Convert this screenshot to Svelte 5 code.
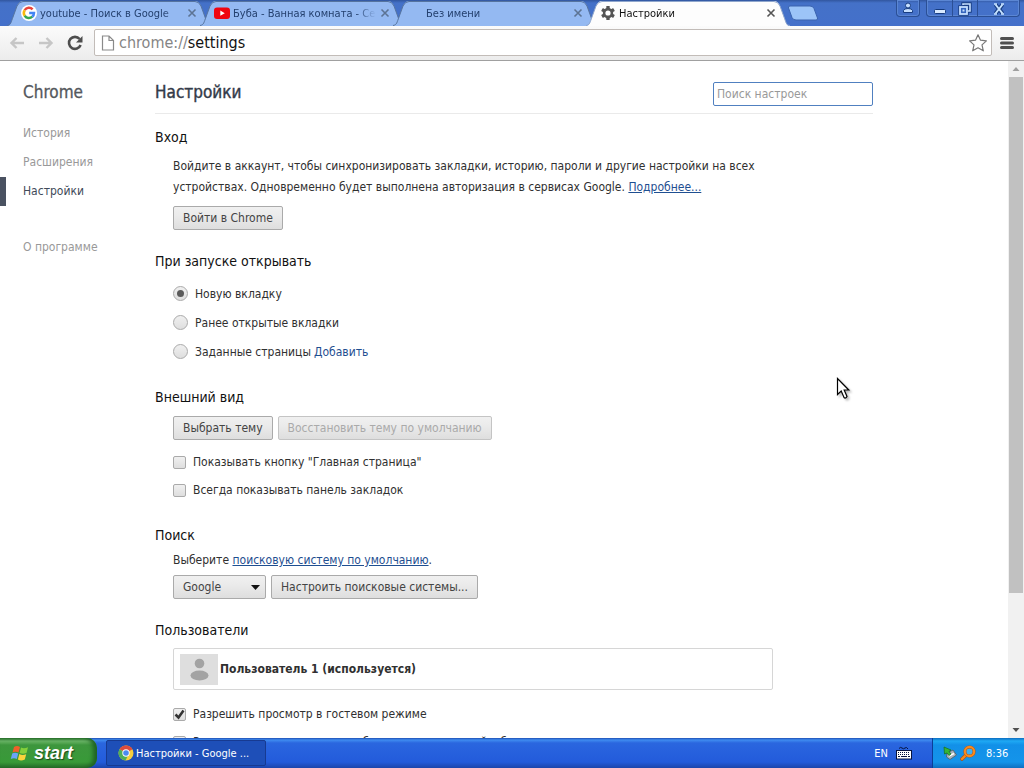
<script>
  let startup = $state('new');
  let home = $state(false);
  let bookmarks = $state(false);
  let guest = $state(true);
  let addPeople = $state(false);
  let query = $state('');
  let url = $state('chrome://settings');

  const tabs = [
    { title: 'youtube - Поиск в Google', icon: 'google' },
    { title: 'Буба - Ванная комната - Се', icon: 'youtube' },
    { title: 'Без имени', icon: '' },
    { title: 'Настройки', icon: 'gear', active: true }
  ];
  const startupOptions = [
    { value: 'new', label: 'Новую вкладку' },
    { value: 'last', label: 'Ранее открытые вкладки' },
    { value: 'pages', label: 'Заданные страницы' }
  ];
</script>

<div class="desktop">
  <header class="titlebar">
    <nav class="tabs">
      {#each tabs as tab}
        <div class="tab" class:active={tab.active}>
          <svg class="shape" viewBox="0 0 204 26" preserveAspectRatio="none" aria-hidden="true">
            <path class="fill" d="M0 26 C4 26 4 22 6 17 L10 6 Q12 1 16 1 H188 Q192 1 194 6 L198 17 C200 22 200 26 204 26 Z" />
            <path class="edge" d="M0 25.5 C4 25 4 22 6 17 L10 6 Q12 1.5 16 1.5 H188 Q192 1.5 194 6 L198 17 C200 22 200 25 204 25.5" />
          </svg>
          <span class="favicon">
            {#if tab.icon === 'google'}
              <svg viewBox="0 0 16 16" width="16" height="16">
                <circle cx="8" cy="8" r="8" fill="#fff" />
                <g fill="none" stroke-width="2.5">
                  <path d="M3.7 5.2 A5 5 0 0 1 11.6 4.4" stroke="#e8453c" />
                  <path d="M3.7 5.2 A5 5 0 0 0 3.7 10.8" stroke="#f7b90f" />
                  <path d="M3.7 10.8 A5 5 0 0 0 11.3 11.7" stroke="#34a753" />
                  <path d="M11.3 11.7 A5 5 0 0 0 13 8 H8.2" stroke="#4285f4" />
                </g>
              </svg>
            {:else if tab.icon === 'youtube'}
              <svg viewBox="0 0 16 16" width="16" height="16">
                <rect x="0" y="2.5" width="16" height="11.5" rx="3" fill="#f00510" />
                <path d="M6.3 5.6 L10.8 8.2 L6.3 10.8 Z" fill="#fff" />
              </svg>
            {:else if tab.icon === 'gear'}
              <svg viewBox="0 0 16 16" width="16" height="16">
                <g fill="#555">
                  <rect x="6.3" y="1" width="3.4" height="14" rx=".6" />
                  <rect x="6.3" y="1" width="3.4" height="14" rx=".6" transform="rotate(60 8 8)" />
                  <rect x="6.3" y="1" width="3.4" height="14" rx=".6" transform="rotate(120 8 8)" />
                  <circle cx="8" cy="8" r="5.2" />
                </g>
                <circle cx="8" cy="8" r="2.6" fill="#fff" />
              </svg>
            {/if}
          </span>
          <span class="title">{tab.title}</span>
          <button class="close" aria-label="Закрыть вкладку">
            <svg viewBox="0 0 10 10" width="10" height="10"><path d="M1.5 1.5 L8.5 8.5 M8.5 1.5 L1.5 8.5" stroke="currentColor" stroke-width="1.6" /></svg>
          </button>
        </div>
      {/each}
      <button class="newtab" aria-label="Новая вкладка">
        <svg viewBox="0 0 32 16" width="32" height="16">
          <path d="M3 1 H23 Q26 1 27 3.5 L30.5 13 Q31 15 29 15 H9 Q6 15 5 12.5 L1.5 3 Q1 1 3 1 Z" fill="#9cc4f8" stroke="#3a63ae" />
        </svg>
      </button>
    </nav>
    <div class="window-buttons">
      <button class="user" aria-label="Пользователь">
        <svg viewBox="0 0 14 14" width="14" height="14"><g fill="#c6dfff" stroke="#173c80"><circle cx="7" cy="4.5" r="2.5" /><path d="M2.5 11.5 V9.500 Q3 7.500 7 7.500 T11.500 9.500 V11.500 Z" /></g></svg>
      </button>
      <div class="group">
        <button aria-label="Свернуть"><svg viewBox="0 0 14 14" width="14" height="14"><rect x="1.5" y="7.5" width="11" height="4" rx="1" fill="#d9eaff" stroke="#173c80" /></svg></button>
        <button aria-label="Развернуть"><svg viewBox="0 0 14 14" width="14" height="14"><g fill="none"><path d="M5 3 V2 H12 V9 H10" stroke="#173c80" stroke-width="3.4" /><rect x="2" y="5" width="7" height="7" stroke="#173c80" stroke-width="3.4" /><path d="M5 3 V2 H12 V9 H10" stroke="#c6dfff" stroke-width="1.6" /><rect x="2" y="5" width="7" height="7" fill="#3565bd" stroke="#c6dfff" stroke-width="1.8" /><rect x="4.5" y="7.5" width="2" height="2" fill="#c6dfff" /></g></svg></button>
        <button class="wide" aria-label="Закрыть"><svg viewBox="0 0 14 14" width="14" height="14"><g fill="none"><path d="M3.5 2.5 L10.5 11.5 M10.5 2.5 L3.5 11.5" stroke="#173c80" stroke-width="4" /><path d="M3.5 2.5 L10.5 11.5 M10.5 2.5 L3.5 11.5" stroke="#c6e2ff" stroke-width="2" /></g><path d="M2 2 H5 M9 2 H12 M2 12 H5 M9 12 H12" stroke="#c6e2ff" stroke-width="1.4" /></svg></button>
      </div>
    </div>
  </header>

  <div class="toolbar">
    <button class="nav" aria-label="Назад"><svg viewBox="0 0 16 16" width="16" height="16"><path d="M15 8 H3 M7.5 3 L2.5 8 L7.5 13" fill="none" stroke="#c6c6c6" stroke-width="2.4" /></svg></button>
    <button class="nav" aria-label="Вперёд"><svg viewBox="0 0 16 16" width="16" height="16"><path d="M1 8 H13 M8.5 3 L13.5 8 L8.5 13" fill="none" stroke="#c6c6c6" stroke-width="2.4" /></svg></button>
    <button class="nav" aria-label="Обновить"><svg viewBox="0 0 16 16" width="16" height="16"><path d="M12.6 4 A6 6 0 1 0 13.6 10" fill="none" stroke="#4d4d4d" stroke-width="2.6" /><path d="M15.5 1 V7.5 H9 Z" fill="#4d4d4d" /></svg></button>
    <div class="omnibox">
      <svg viewBox="0 0 14 16" width="14" height="16" aria-hidden="true"><path d="M1.5 1 H8 L12.5 5.5 V15 H1.5 Z M8 1 V5.5 H12.5" fill="#fff" stroke="#8a8a8a" stroke-width="1.2" /></svg>
      <label class="address">
        <span class="shown" aria-hidden="true"><i>{url.slice(0, 9)}</i>{url.slice(9)}</span>
        <input type="text" aria-label="Адрес" bind:value={url} />
      </label>
      <button class="star" aria-label="Добавить в закладки"><svg viewBox="0 0 20 20" width="20" height="20"><path d="M10 1.8 L12.5 7.2 L18.4 7.9 L14 11.9 L15.3 17.8 L10 14.8 L4.7 17.8 L6 11.9 L1.6 7.9 L7.5 7.2 Z" fill="#fff" stroke="#777" stroke-width="1.2" stroke-linejoin="round" /></svg></button>
    </div>
    <button class="menu" aria-label="Меню"><svg viewBox="0 0 14 14" width="14" height="14"><path d="M1.5 2.5 H12.5 M1.5 7 H12.5 M1.5 11.5 H12.5" stroke="#505050" stroke-width="3" stroke-linecap="round" /></svg></button>
  </div>

  <div class="page">
    <aside>
      <h1>Chrome</h1>
      <a href="#history">История</a>
      <a href="#extensions">Расширения</a>
      <a href="#settings" class="current">Настройки</a>
      <a href="#about" class="about">О программе</a>
    </aside>

    <main>
      <div class="head">
        <h2>Настройки</h2>
        <input type="search" aria-label="Поиск настроек" placeholder="Поиск настроек" bind:value={query} />
      </div>

      <section>
        <h3>Вход</h3>
        <p>Войдите в аккаунт, чтобы синхронизировать закладки, историю, пароли и другие настройки на всех устройствах. Одновременно будет выполнена авторизация в сервисах Google. <a class="underlined" href="#more">Подробнее...</a></p>
        <div class="row first"><button class="btn">Войти в Chrome</button></div>
      </section>

      <section>
        <h3>При запуске открывать</h3>
        <div class="radios">
          {#each startupOptions as option}
            <div class="radio">
              <label><input type="radio" name="startup" value={option.value} bind:group={startup} />{option.label}</label>
              {#if option.value === 'pages'}<a href="#add">Добавить</a>{/if}
            </div>
          {/each}
        </div>
      </section>

      <section>
        <h3>Внешний вид</h3>
        <div class="row">
          <button class="btn">Выбрать тему</button>
          <button class="btn" disabled>Восстановить тему по умолчанию</button>
        </div>
        <div class="checks">
          <label><input type="checkbox" bind:checked={home} />Показывать кнопку "Главная страница"</label>
          <label><input type="checkbox" bind:checked={bookmarks} />Всегда показывать панель закладок</label>
        </div>
      </section>

      <section>
        <h3>Поиск</h3>
        <p class="tight">Выберите <a class="underlined" href="#engine">поисковую систему по умолчанию</a>.</p>
        <div class="row engines">
          <select aria-label="Поисковая система">
            <option>Google</option>
            <option>Яндекс</option>
          </select>
          <button class="btn">Настроить поисковые системы...</button>
        </div>
      </section>

      <section>
        <h3 class="snug">Пользователи</h3>
        <div class="profile">
          <svg viewBox="0 0 38 31" width="38" height="31" aria-hidden="true"><rect width="38" height="31" fill="#dedede" /><circle cx="19.5" cy="9.5" r="4.8" fill="#a3a3a3" /><ellipse cx="19.5" cy="21.5" rx="9" ry="5" fill="#a3a3a3" /></svg>
          <strong>Пользователь 1 (используется)</strong>
        </div>
        <div class="checks last">
          <label><input type="checkbox" bind:checked={guest} />Разрешить просмотр в гостевом режиме</label>
          <label><input type="checkbox" bind:checked={addPeople} />Разрешить пользователям добавлять новых людей в браузер</label>
        </div>
      </section>
    </main>

    <div class="scrollbar" aria-hidden="true">
      <svg viewBox="0 0 16 16" width="16" height="16"><path d="M4.5 10 H11.5 L8 6 Z" fill="#a0a0a0" /></svg>
      <div class="track"><div class="thumb"></div><div class="rest"></div></div>
      <svg viewBox="0 0 16 16" width="16" height="16"><path d="M4.5 6 H11.5 L8 10 Z" fill="#505050" /></svg>
    </div>

    <svg class="cursor" viewBox="0 0 16 24" width="16" height="24" aria-hidden="true">
      <path d="M1.5 1.5 V17.5 L5.2 14 L8 20.5 Q9.5 22 11 19.5 L8.2 13 H12.8 Z" fill="#fff" stroke="#000" stroke-width="1.2" />
    </svg>
  </div>

  <footer class="taskbar">
    <button class="start">
      <svg viewBox="0 0 20 20" width="20" height="20" aria-hidden="true">
        <path d="M4 4 Q7 2 10 4 L8.5 9.5 Q5.5 8 2.5 9.5 Z" fill="#f0602a" />
        <path d="M11 4.5 Q14 6 18 4.2 L16.5 10 Q13 11.5 9.6 10 Z" fill="#84cf3c" />
        <path d="M2.2 10.6 Q5 9 8.2 10.6 L6.8 16 Q4 14.5 .8 16 Z" fill="#6aa4f8" />
        <path d="M9.3 11 Q12.5 12.8 16.2 11.2 L14.8 16.5 Q11 18.5 7.9 16.6 Z" fill="#fbd33c" />
      </svg>
      <span>start</span>
    </button>
    <button class="task">
      <svg viewBox="0 0 16 16" width="16" height="16" aria-hidden="true">
        <circle cx="8" cy="8" r="7.5" fill="#f6cf3e" />
        <path d="M8 8 L1.5 4.25 A7.5 7.5 0 0 1 14.5 4.25 Z" fill="#dd4b3e" />
        <path d="M8 8 L1.5 4.25 A7.5 7.5 0 0 0 7.5 15.5 L10.5 9.5 Z" fill="#4fae5a" />
        <circle cx="8" cy="8" r="3.7" fill="#fff" />
        <circle cx="8" cy="8" r="2.8" fill="#4a8af0" />
      </svg>
      <span>Настройки - Google ...</span>
    </button>
    <div class="lang">
      <span>EN</span>
      <svg viewBox="0 0 16 14" width="16" height="14" aria-hidden="true">
        <path d="M3 2.5 Q4.5 .5 6 2 T9 2 T12 3" fill="none" stroke="#06133f" />
        <rect x=".5" y="4.5" width="15" height="8.5" fill="#fff" stroke="#06133f" />
        <path d="M2 6.5 H14 M2 8.5 H14" stroke="#06133f" stroke-dasharray="1 1" /><path d="M2 10.5 H4 M5 10.5 H11 M12 10.5 H14" stroke="#06133f" />
      </svg>
    </div>
    <div class="tray">
      <svg viewBox="0 0 16 16" width="16" height="16" aria-hidden="true">
        <path d="M5 8 L11 5 L14.5 10 L8 14.5 L4.5 12 Z" fill="#a9b3ba" stroke="#4d5c68" stroke-width=".8" /><path d="M7 11 L12 8.5" stroke="#fff" stroke-width="1.5" />
        <path d="M2 2 L9 5 L7 6.5 L9 9 L7 10.5 L5 8 L2.5 9 Z" fill="#35b535" stroke="#146b1e" stroke-width=".7" />
      </svg>
      <svg viewBox="0 0 16 16" width="16" height="16" aria-hidden="true">
        <path d="M6.5 9.5 L2 14" stroke="#b84f08" stroke-width="3.6" stroke-linecap="round" /><path d="M6.5 9.5 L2 14" stroke="#f58a1f" stroke-width="2.4" stroke-linecap="round" />
        <circle cx="9.5" cy="6.5" r="4.6" fill="#3fb0f2" stroke="#b84f08" stroke-width="3" /><circle cx="9.5" cy="6.5" r="4.6" fill="none" stroke="#f58a1f" stroke-width="2.2" />
      </svg>
      <time>8:36</time>
    </div>
  </footer>
</div>

<style>
  :global(body) { background: #fff; }
  .desktop, .desktop * { box-sizing: border-box; }
  .desktop {
    display: flex; flex-direction: column; height: 100vh; overflow: hidden;
    font-family: "DejaVu Sans Condensed", "Noto Sans", sans-serif; font-size: 12px; color: #303030;
  }
  button, input, select { font: inherit; color: inherit; margin: 0; }
  button { border: 0; background: none; padding: 0; }
  svg { display: block; flex: none; }
  h1, h2, h3, p { margin: 0; font-weight: normal; }

  .titlebar { flex: none; display: flex; justify-content: space-between; height: 26px; background: linear-gradient(#31569f 0, #4471c8 3px, #4470ca 100%); }
  .tabs { flex: 1; display: flex; min-width: 0; padding-left: 7px; }
  .tab { position: relative; display: flex; align-items: center; flex: 0 1 204px; min-width: 0; height: 26px; margin-right: -11px; padding: 0 14px; color: #24406e; font-size: 11px; }
  .tab.active { z-index: 1; color: #111; }
  .shape { position: absolute; inset: 0; width: 100%; height: 100%; }
  .fill { fill: #94b9f2; }
  .edge { fill: none; stroke: #56749f; }
  .active .fill { fill: #fdfdfd; }
  .active .edge { stroke: #8fa6cc; }
  .favicon { position: relative; width: 16px; height: 16px; margin-right: 3px; flex: none; }
  .title { position: relative; flex: 1; overflow: hidden; white-space: nowrap; margin-right: 4px; mask-image: linear-gradient(90deg, #000 calc(100% - 20px), transparent); }
  .close { position: relative; color: #5c7394; }
  .active .close { color: #555; }
  .newtab { align-self: center; margin-left: 8px; }

  .window-buttons { display: flex; gap: 6px; padding-right: 4px; }
  .window-buttons button { display: flex; align-items: center; justify-content: center; width: 25px; height: 17px; }
  .window-buttons .user { width: 24px; border: 1px solid #2b4f95; border-top: 0; border-radius: 0 0 4px 4px; box-shadow: inset 0 0 0 1px #5b86d3; }
  .group { display: flex; height: 17px; border: 1px solid #2b4f95; border-top: 0; border-radius: 0 0 4px 4px; box-shadow: inset 0 0 0 1px #5b86d3; }
  .group button + button { border-left: 1px solid #2b4f95; }
  .window-buttons .wide { width: 42px; }

  .toolbar { flex: none; display: flex; align-items: center; height: 35px; padding: 0 10px 1px 9px; background: linear-gradient(#fbfbfb, #ececec); border-bottom: 1px solid #a0a0a0; }
  .nav { margin-right: 13px; }
  .nav:nth-child(3) { margin-right: 11px; }
  .omnibox { flex: 1; display: flex; align-items: center; min-width: 0; height: 27px; padding: 0 3px 0 6px; gap: 4px; background: #fff; border: 1px solid #c2bcb8; border-radius: 2px; }
  .address { position: relative; flex: 1; font-size: 16px; }
  .shown { position: absolute; inset: 0; line-height: 24px; color: #111; white-space: nowrap; pointer-events: none; }
  .shown i { font-style: normal; color: #858585; }
  .address input { display: block; width: 100%; height: 24px; padding: 0; border: 0; outline: 0; background: none; color: transparent; caret-color: #111; }
  .menu { margin-left: 8px; }

  .page { flex: 1; position: relative; display: flex; min-height: 0; overflow: hidden; background: #fff; }
  aside { flex: none; display: flex; flex-direction: column; width: 155px; padding-top: 19px; }
  h1 { padding-left: 23px; margin-bottom: 15px; font-size: 17px; line-height: 24px; color: #55585d; -webkit-text-stroke: 0.3px; }
  aside a { padding-left: 23px; line-height: 29px; color: #999; text-decoration: none; }
  aside .current { padding-left: 17px; border-left: 6px solid #4a5261; color: #414a59; }
  aside .about { margin-top: 27px; }

  main { flex: 0 1 718px; min-width: 0; }
  .head { display: flex; align-items: center; justify-content: space-between; padding: 21px 0 7px; border-bottom: 1px solid #eaeaea; margin-bottom: 13px; }
  h2 { font-size: 17px; line-height: 20px; padding-bottom: 4px; color: #333b49; -webkit-text-stroke: 0.4px; }
  .head input { width: 160px; height: 24px; padding: 0 3px; border: 1px solid #5080c0; border-radius: 2px; outline: 0; background: #fff; appearance: none; }
  .head input::placeholder { color: #999; opacity: 1; }
  section { margin-bottom: 21px; padding-left: 18px; }
  h3 { margin: 0 0 9px -18px; font-size: 14px; line-height: 20px; color: #111; }
  h3.snug { margin-bottom: 8px; }
  p { max-width: 600px; line-height: 21px; }
  a { color: #1f4f91; text-decoration: none; }
  .underlined { text-decoration: underline; }
  .row { display: flex; gap: 5px; }
  .row.first { margin-top: 8px; }
  .row.engines { margin-top: 4px; }
  .tight { margin-top: -4px; }
  .btn, select { height: 24px; padding: 0 9px; border: 1px solid #aaa; border-radius: 2px; background: linear-gradient(#f0f0f0, #ebebeb 38%, #dedede); color: #444; white-space: nowrap; }
  .btn:disabled { color: #aaa; border-color: #c4c4c4; }
  select {
    width: 93px; appearance: none;
    background: url("data:image/svg+xml,%3Csvg xmlns='http://www.w3.org/2000/svg' width='9' height='5'%3E%3Cpath d='M0 0H9L4.5 5Z' fill='%23111'/%3E%3C/svg%3E") right 5px center no-repeat,
      linear-gradient(#f0f0f0, #ebebeb 38%, #dedede);
  }
  .radios { margin-top: -1px; }
  .radio { display: flex; align-items: center; gap: 3px; height: 29px; }
  label { display: flex; align-items: center; }
  input[type="radio"], input[type="checkbox"] { appearance: none; flex: none; display: grid; place-items: center; border: 1px solid #aaa; background: linear-gradient(#f0f0f0, #dedede); }
  input[type="radio"] { width: 15px; height: 15px; margin-right: 7px; border-radius: 50%; }
  input[type="radio"]:checked::before { content: ""; width: 7px; height: 7px; border-radius: 50%; background: #5a5a5a; }
  input[type="checkbox"] { width: 13px; height: 13px; margin-right: 7px; border-radius: 2px; }
  input[type="checkbox"]:checked { background: url("data:image/svg+xml,%3Csvg xmlns='http://www.w3.org/2000/svg' width='11' height='11'%3E%3Cpath d='M1.5 5.5L4.5 8.5L9.5 1.5' fill='none' stroke='%23333' stroke-width='2.5'/%3E%3C/svg%3E") center no-repeat, linear-gradient(#f0f0f0, #dedede); }
  .checks { margin-top: 8px; }
  .checks.last { margin-top: 10px; }
  .checks label { height: 28px; white-space: nowrap; }
  .profile { display: flex; align-items: center; gap: 2px; max-width: 600px; height: 42px; padding: 0 6px; border: 1px solid #d6d6d6; border-radius: 2px; }

  .scrollbar { display: flex; flex-direction: column; width: 16px; margin-left: auto; background: #f1f1f1; }
  .track { flex: 1; display: flex; flex-direction: column; }
  .thumb { flex: 4; margin: 0 1px; background: #c1c1c1; }
  .rest { flex: 1; }
  .cursor { position: absolute; left: 836px; top: 316px; filter: drop-shadow(2px 2px 1px #0004); }

  .taskbar { flex: none; display: flex; height: 30px; color: #fff; font-size: 11px; background: linear-gradient(#1f4fb4 0, #3f8cf0 2px, #2a66df 5px, #235bdb 24px, #1c45ab 100%); }
  .start { display: flex; align-items: center; gap: 4px; width: 97px; padding-left: 10px; border-radius: 0 10px 10px 0; background: linear-gradient(#2f7a31 0, #6cb668 3px, #3d963d 7px, #389a38 24px, #27702a 100%); box-shadow: inset -4px 0 4px #1f6325; color: #fff; }
  .start span { font-family: "Liberation Sans", sans-serif; font-size: 18px; font-weight: bold; font-style: italic; text-shadow: 1px 1px 1px #1a4a1c; }
  .task { display: flex; align-items: center; gap: 2px; align-self: center; width: 160px; height: 26px; margin-left: 9px; padding-left: 11px; border: 1px solid #173a91; border-radius: 2px; background: #1e4fb8; color: #fff; }
  .lang { display: flex; align-items: center; gap: 8px; margin-left: auto; padding-right: 20px; }
  .tray { display: flex; align-items: center; gap: 2px; width: 92px; padding-left: 9px; border-left: 1px solid #0b3f98; background: linear-gradient(#0d6cc0 0, #1ea9f4 3px, #1290e8 7px, #1494ea 24px, #0f6fc0 100%); }
  .tray time { margin-left: 8px; }
</style>
